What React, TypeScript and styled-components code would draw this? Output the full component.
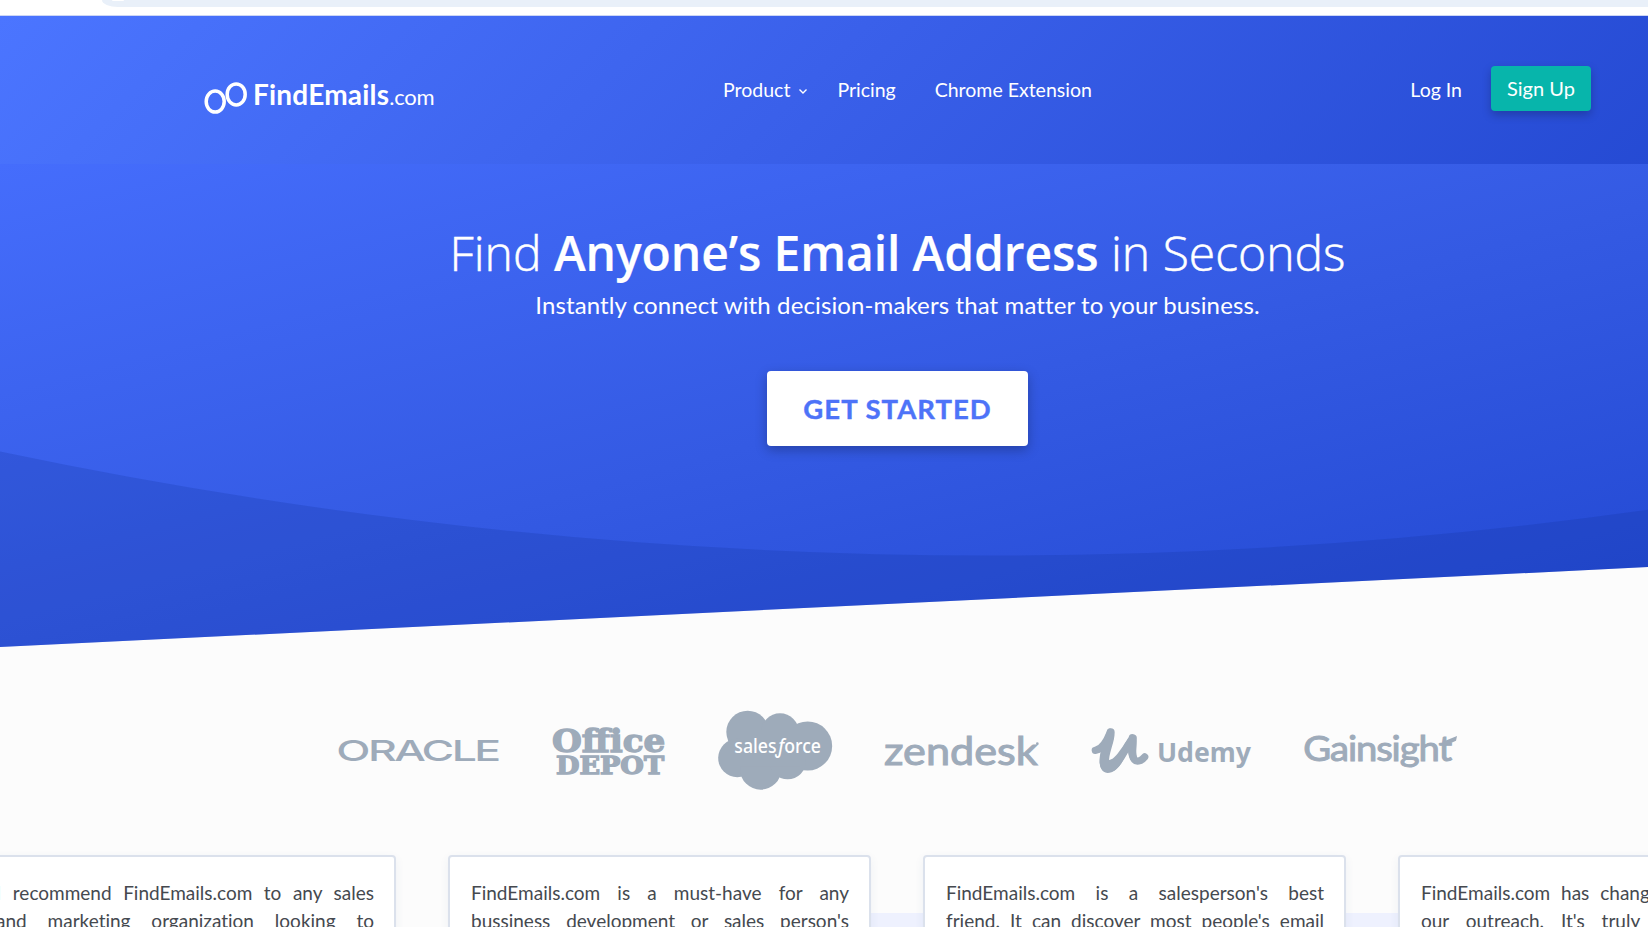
import React from 'react';
import styled, { createGlobalStyle } from 'styled-components';

const SANS = 'Lato, "Noto Sans", sans-serif';
const HUMANIST = '"Open Sans", "Noto Sans", sans-serif';
const LOGO_GREY = '#9eabba';

const GlobalStyle = createGlobalStyle`
  * { box-sizing: border-box; }
  html, body { margin: 0; padding: 0; }
  body { background: #fcfcfc; font-family: ${SANS}; }
  h1, p { margin: 0; }
`;

const Viewport = styled.div`
  width: 100%;
  height: 927px;
  overflow: hidden;
  background: #fcfcfc;
`;

const Page = styled.div`
  width: 1795px;
`;

const BrowserBar = styled.div`
  height: 16px;
  padding-left: 102px;
  background: #fff;
  border-bottom: 1px solid #ccd6f5;
`;

const AddressBar = styled.div`
  height: 7px;
  padding-left: 10px;
  background: #e9f0f9;
  border-bottom-left-radius: 16px 7px;
`;

const SiteChip = styled.div`
  width: 12px;
  height: 1px;
  background: #fff;
  border-radius: 0 0 6px 6px;
`;

const Header = styled.header`
  display: flex;
  align-items: flex-start;
  height: 148px;
  padding: 50px 204px 0;
  background: linear-gradient(135deg, #4b75ff 0%, #3a60ea 45%, #2247d0 100%);
  color: #fff;
`;

const Brand = styled.a`
  display: flex;
  flex: 0 0 519px;
  align-items: flex-start;
  padding-top: 11px;
`;

const Glasses = styled.svg`
  flex: none;
  width: 44px;
  height: 36px;
  margin: 2px 5px 0 0;
`;

const BrandName = styled.span`
  font-size: 28px;
  line-height: 34px;
  font-weight: 700;
  letter-spacing: 0.2px;
`;

const BrandSuffix = styled.span`
  font-size: 22px;
  font-weight: 400;
  letter-spacing: -0.2px;
`;

const Nav = styled.nav`
  display: flex;
  flex: 1;
  align-items: center;
  height: 45px;
  padding-top: 1px;
`;

const NavLink = styled.a<{ $gap?: number }>`
  display: flex;
  align-items: center;
  margin-right: ${({ $gap = 0 }) => $gap}px;
  font-size: 19.5px;
  white-space: nowrap;
`;

const Chevron = styled.svg`
  width: 8px;
  height: 5px;
  margin: 4px 0 0 9px;
`;

const AccountLinks = styled.div`
  display: flex;
  flex: none;
  align-items: center;
`;

const LogIn = styled(NavLink)`
  padding-top: 2px;
`;

const SignUp = styled.a`
  display: flex;
  align-items: center;
  justify-content: center;
  width: 100px;
  height: 45px;
  padding-bottom: 1px;
  border-radius: 4px;
  background: #07b5ab;
  box-shadow: 0 4px 10px rgba(0, 0, 0, 0.22);
  font-size: 20px;
`;

const Hero = styled.section`
  display: grid;
  height: 483px;
  background: linear-gradient(165deg, #456dfc 0%, #345ae3 50%, #2046d0 100%);
  clip-path: polygon(0 0, 100% 0, 100% 396px, 0 100%);
`;

const HeroShade = styled.svg`
  grid-area: 1 / 1;
  width: 1795px;
  height: 483px;
`;

const HeroBody = styled.div`
  grid-area: 1 / 1;
  display: flex;
  flex-direction: column;
  align-items: center;
  padding-top: 59px;
  color: #fff;
`;

const Title = styled.h1`
  font-family: ${HUMANIST};
  font-size: 48px;
  line-height: 60px;
  font-weight: 300;
  white-space: pre;
  -webkit-text-stroke: 0.5px #fff;

  strong {
    font-weight: 600;
    letter-spacing: -0.1px;
    -webkit-text-stroke: 0.2px #fff;
  }
`;

const Subtitle = styled.p`
  margin-top: 4px;
  font-size: 24px;
  line-height: 36px;
  letter-spacing: 0.12px;
`;

const GetStarted = styled.a`
  display: flex;
  align-items: center;
  justify-content: center;
  width: 261px;
  height: 75px;
  margin-top: 48px;
  border-radius: 4px;
  background: #fff;
  box-shadow: 0 4px 12px rgba(0, 0, 0, 0.26);
  color: #4d73f8;
  font-size: 27.5px;
  font-weight: 700;
  letter-spacing: 1px;
  -webkit-text-stroke: 0.4px #4d73f8;
`;

const Customers = styled.section`
  display: flex;
  justify-content: center;
  gap: 53px;
  margin-top: 53px;
`;

const CustomerLogo = styled.svg<{ $width: number }>`
  flex: none;
  overflow: visible;
  width: ${({ $width }) => $width}px;
  height: 100px;
  fill: ${LOGO_GREY};
`;

const Testimonials = styled.section`
  display: flex;
  gap: 52px;
  height: 200px;
  margin-top: 55px;
  background: linear-gradient(#eef1fe, #eef1fe) 700px 58px / 100% 100% no-repeat;
`;

const Card = styled.article`
  flex: 0 0 423px;
  padding: 22px 20px 0 21px;
  border: 2px solid #dbe1ec;
  border-radius: 4px;
  background: #fff;
  box-shadow: 0 3px 10px rgba(60, 80, 130, 0.07);
  color: #45494f;

  &:first-child { margin-left: -27px; }
`;

const QuoteLine = styled.p<{ $space?: number }>`
  font-size: 19px;
  line-height: 28px;
  font-variant-ligatures: none;
  white-space: ${({ $space }) => ($space ? 'nowrap' : 'normal')};
  word-spacing: ${({ $space = 0 }) => $space}px;
  text-align: justify;
  text-align-last: ${({ $space }) => ($space ? 'left' : 'justify')};
`;

const quotes: { text: string; space?: number }[][] = [
  [{ text: 'I recommend FindEmails.com to any sales' }, { text: 'and marketing organization looking to' }],
  [{ text: 'FindEmails.com is a must-have for any' }, { text: "bussiness development or sales person's" }],
  [{ text: "FindEmails.com is a salesperson's best" }, { text: "friend. It can discover most people's email" }],
  [{ text: 'FindEmails.com has changed the way', space: 6 }, { text: "our outreach. It's truly been a", space: 12 }],
];

function BrandGlasses() {
  return (
    <Glasses viewBox="0 0 44 36" fill="none" stroke="#fff" strokeWidth="3.5">
      <ellipse cx="11.2" cy="22.6" rx="9" ry="10.5" />
      <ellipse cx="32.2" cy="15.4" rx="9" ry="10.5" />
    </Glasses>
  );
}

function Oracle() {
  return (
    <CustomerLogo $width={162} viewBox="54 0 486 300" role="img">
      <text x="49" y="182" fontFamily="Inter, sans-serif" fontSize="86" fontWeight="500" letterSpacing="-5" textLength="487" lengthAdjust="spacingAndGlyphs">ORACLE</text>
    </CustomerLogo>
  );
}

function OfficeDepot() {
  return (
    <CustomerLogo $width={112} viewBox="699 0 336 300" role="img" fontFamily='"DejaVu Serif", serif' fontWeight="700">
      <text x="696" y="157" fontSize="95" textLength="340" lengthAdjust="spacingAndGlyphs" stroke={LOGO_GREY} strokeWidth="4">Office</text>
      <text x="708" y="221" fontSize="71" textLength="324" lengthAdjust="spacingAndGlyphs" stroke={LOGO_GREY} strokeWidth="4">DEPOT</text>
    </CustomerLogo>
  );
}

function Salesforce() {
  return (
    <CustomerLogo $width={114} viewBox="54 0 342 300" role="img">
      <circle cx="143" cy="96" r="64" />
      <circle cx="240" cy="97" r="57" />
      <circle cx="323" cy="138" r="73.5" />
      <circle cx="112" cy="174" r="57.5" />
      <circle cx="182" cy="207" r="62" />
      <circle cx="263" cy="183" r="55" />
      <rect x="120" y="90" width="180" height="110" />
      <text x="103" y="160" fill="#fff" fontFamily='"Noto Sans", sans-serif' fontSize="57" fontWeight="500" textLength="260" lengthAdjust="spacingAndGlyphs">
        sales<tspan fontStyle="italic">ƒ</tspan>orce
      </text>
    </CustomerLogo>
  );
}

function Zendesk() {
  return (
    <CustomerLogo $width={154} viewBox="555 0 462 300" role="img">
      <text x="552" y="194" fontFamily="Lato, sans-serif" fontSize="115" fontWeight="400" textLength="461" lengthAdjust="spacingAndGlyphs" stroke={LOGO_GREY} strokeWidth="3">zendesk</text>
      <circle cx="1012" cy="131" r="4" />
    </CustomerLogo>
  );
}

function Udemy() {
  return (
    <CustomerLogo $width={159} viewBox="66 0 477 300" role="img">
      <path
        d="M76 151 C97 148 110 124 121 97 C123 130 98 160 100 188 C102 212 124 210 139 192 C160 166 172 135 188 117 C190 135 183 160 190 174 C197 189 214 184 224 171"
        fill="none"
        stroke={LOGO_GREY}
        strokeWidth="22"
        strokeLinecap="round"
        strokeLinejoin="round"
      />
      <path d="M110 97 A12 12 0 0 1 134 97 C134 125 120 150 117 180 C135 180 158 140 176 112 A12 12 0 0 1 200 117 C200 140 197 160 201 170 L190 184 C176 178 174 160 174 150 C160 185 140 219 112 219 C86 216 86 180 92 155 C86 160 80 160 72 158 C88 150 100 125 110 97 Z" />
      <text x="261" y="186" fontFamily='"Noto Sans", sans-serif' fontSize="82" fontWeight="700" textLength="282" lengthAdjust="spacingAndGlyphs">Udemy</text>
    </CustomerLogo>
  );
}

function Gainsight() {
  return (
    <CustomerLogo $width={153} viewBox="702 0 459 300" role="img">
      <text x="700" y="182" fontFamily="Lato, sans-serif" fontSize="105" fontWeight="400" letterSpacing="-3" textLength="443" lengthAdjust="spacingAndGlyphs" stroke={LOGO_GREY} strokeWidth="3">Gainsight</text>
      <path d="M1122 124 L1161 108 L1158 122 L1122 139 Z" />
    </CustomerLogo>
  );
}

export default function App() {
  return (
    <Viewport>
      <GlobalStyle />
      <Page>
        <BrowserBar>
          <AddressBar><SiteChip /></AddressBar>
        </BrowserBar>
        <Header>
          <Brand>
            <BrandGlasses />
            <BrandName>FindEmails<BrandSuffix>.com</BrandSuffix></BrandName>
          </Brand>
          <Nav>
            <NavLink $gap={30}>
              Product
              <Chevron viewBox="0 0 8 5" fill="none" stroke="#fff" strokeWidth="1.4"><path d="M0.5 0.5 L4 4 L7.5 0.5" /></Chevron>
            </NavLink>
            <NavLink $gap={39}>Pricing</NavLink>
            <NavLink>Chrome Extension</NavLink>
          </Nav>
          <AccountLinks>
            <LogIn $gap={29}>Log In</LogIn>
            <SignUp>Sign Up</SignUp>
          </AccountLinks>
        </Header>
        <Hero>
          <HeroShade viewBox="0 0 1795 483">
            <path d="M0 287.5 Q897.5 476 1795 323 V483 H0 Z" fill="#12309a" fillOpacity="0.22" />
          </HeroShade>
          <HeroBody>
            <Title>Find <strong>Anyone’s Email Address</strong> in Seconds</Title>
            <Subtitle>Instantly connect with decision-makers that matter to your business.</Subtitle>
            <GetStarted>GET STARTED</GetStarted>
          </HeroBody>
        </Hero>
        <Customers>
          <Oracle />
          <OfficeDepot />
          <Salesforce />
          <Zendesk />
          <Udemy />
          <Gainsight />
        </Customers>
        <Testimonials>
          {quotes.map((lines) => (
            <Card key={lines[1].text}>
              {lines.map(({ text, space }) => (
                <QuoteLine key={text} $space={space}>{text}</QuoteLine>
              ))}
            </Card>
          ))}
        </Testimonials>
      </Page>
    </Viewport>
  );
}
